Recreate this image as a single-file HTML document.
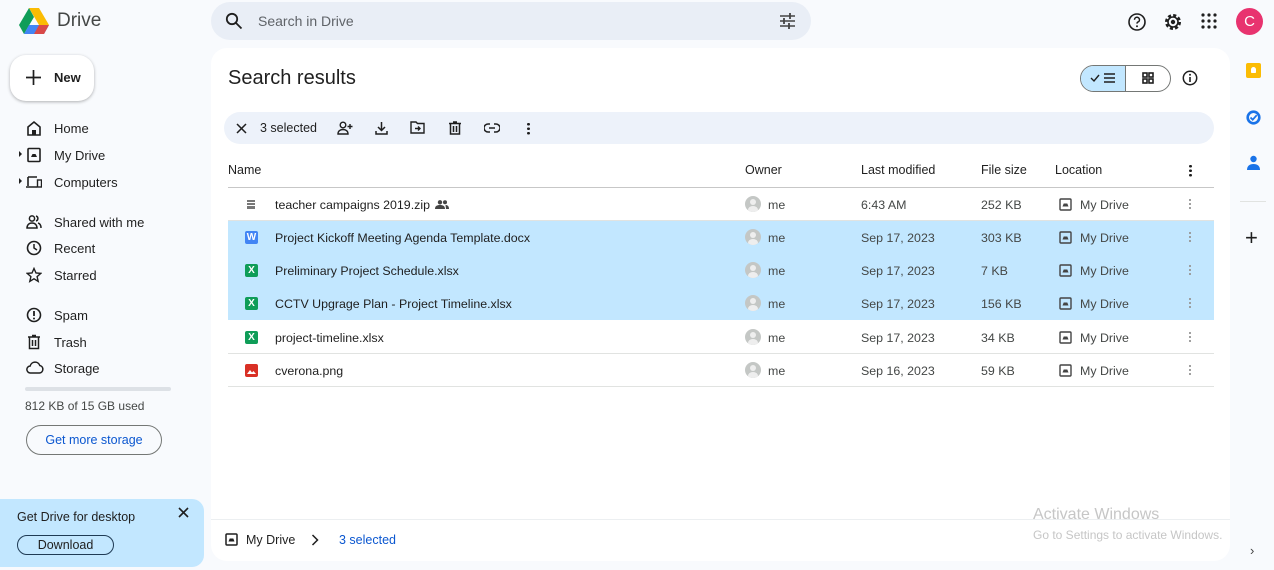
<!DOCTYPE html>
<html><head><meta charset="utf-8">
<style>
*{box-sizing:border-box;margin:0;padding:0}
body{width:1274px;height:570px;overflow:hidden;background:#f8fafd;font-family:"Liberation Sans",Arial,sans-serif;color:#1f1f1f;position:relative;font-size:13px}
.abs{position:absolute}
svg{display:block}
.nav{position:absolute;left:26px;display:flex;align-items:center;font-size:13px;color:#1f1f1f}
.nav svg{margin-right:12px}
.panel{position:absolute;left:211px;top:48px;width:1019px;height:513px;background:#fff;border-radius:16px}
.row{position:absolute;left:17px;width:986px;height:33px;border-bottom:1px solid #e1e3e1;font-size:12.4px}
.row.sel{background:#c2e7ff;border-bottom:1px solid #c2e7ff}
.row span{position:absolute;top:10px}
.row .g{color:#444746}
.fi{position:absolute;left:17px;top:10px;width:13px;height:13px;border-radius:2px;color:#fff;font-size:10px;font-weight:bold;text-align:center;line-height:13px}
.av{position:absolute;left:517px;top:8px;width:16px;height:16px;border-radius:50%;background:#c4c7c5;overflow:hidden}
.av:before{content:"";position:absolute;left:5px;top:3px;width:6px;height:6px;border-radius:50%;background:#eee}
.av:after{content:"";position:absolute;left:3px;top:10px;width:10px;height:8px;border-radius:50%;background:#eee}
.dots{position:absolute;left:961px;top:10px;width:2px;height:12px;background:radial-gradient(circle,#999 1px,transparent 1.2px) 0 0/2px 4px}
.hdr{position:absolute;top:115px;font-size:12.5px;color:#1f1f1f}
</style></head><body>

<svg class="abs" style="left:18px;top:7px" width="32" height="28" viewBox="0 0 32 28">
<path d="M11 1h10l10 17h-10z" fill="#fbbc04"/>
<path d="M11 1L1 18l5 9 10-17z" fill="#0f9d58"/>
<path d="M6 27h20l5-9H11z" fill="#4285f4"/>
<path d="M21 18h10l-5 9h-10z" fill="#ea4335" opacity=".9"/>
</svg>
<div class="abs" style="left:57px;top:10px;font-size:19px;color:#444746">Drive</div>

<div class="abs" style="left:211px;top:2px;width:600px;height:38px;border-radius:19px;background:#e9eef6"></div>
<svg class="abs" style="left:225px;top:12px" width="18" height="18" viewBox="0 0 18 18"><circle cx="7" cy="7" r="5.2" fill="none" stroke="#1f1f1f" stroke-width="1.8"/><path d="M11 11l5.5 5.5" stroke="#1f1f1f" stroke-width="1.8"/></svg>
<div class="abs" style="left:258px;top:13px;font-size:14px;color:#5f6368">Search in Drive</div>
<svg class="abs" style="left:779px;top:13px" width="17" height="16" viewBox="0 0 17 16"><path d="M1 3h15M1 8h15M1 13h15" stroke="#444" stroke-width="1.6"/><path d="M11 0v6M5 5v6M10 10v6" stroke="#444" stroke-width="1.8"/></svg>

<svg class="abs" style="left:1127px;top:12px" width="20" height="20" viewBox="0 0 20 20"><circle cx="10" cy="10" r="8" fill="none" stroke="#1f1f1f" stroke-width="1.6"/><path d="M7.5 7.8a2.5 2.5 0 1 1 3.3 2.3c-.6.3-.8.7-.8 1.5" fill="none" stroke="#1f1f1f" stroke-width="1.5"/><circle cx="10" cy="14.3" r="1" fill="#1f1f1f"/></svg>
<svg class="abs" style="left:1163px;top:12px" width="20" height="20" viewBox="0 0 20 20"><circle cx="10" cy="10" r="6.5" fill="none" stroke="#1f1f1f" stroke-width="3" stroke-dasharray="3 2.1"/><circle cx="10" cy="10" r="5" fill="none" stroke="#1f1f1f" stroke-width="1.6"/><circle cx="10" cy="10" r="2.2" fill="#1f1f1f"/></svg>
<svg class="abs" style="left:1201px;top:13px" width="16" height="16" viewBox="0 0 16 16" fill="#1f1f1f"><circle cx="2" cy="2" r="1.6"/><circle cx="8" cy="2" r="1.6"/><circle cx="14" cy="2" r="1.6"/><circle cx="2" cy="8" r="1.6"/><circle cx="8" cy="8" r="1.6"/><circle cx="14" cy="8" r="1.6"/><circle cx="2" cy="14" r="1.6"/><circle cx="8" cy="14" r="1.6"/><circle cx="14" cy="14" r="1.6"/></svg>
<div class="abs" style="left:1236px;top:8px;width:27px;height:27px;border-radius:50%;background:#e8336f;color:#fff;font-size:15px;text-align:center;line-height:27px">C</div>

<div class="abs" style="left:1246px;top:63px;width:15px;height:15px;background:#fbbc04;border-radius:2px"></div>
<div class="abs" style="left:1251px;top:67px;width:5px;height:6px;background:#fff;border-radius:3px 3px 1px 1px"></div>
<svg class="abs" style="left:1246px;top:110px" width="15" height="15" viewBox="0 0 15 15"><circle cx="7.5" cy="7.5" r="5.8" fill="none" stroke="#1a73e8" stroke-width="2.6"/><path d="M4.5 7.5l2.2 2.2 4-4.5" fill="none" stroke="#1a73e8" stroke-width="1.8"/></svg>
<svg class="abs" style="left:1247px;top:155px" width="13" height="16" viewBox="0 0 13 16"><circle cx="6.5" cy="4" r="3.2" fill="#1a73e8"/><path d="M0 15c0-4 2.5-6 6.5-6s6.5 2 6.5 6z" fill="#1a73e8"/></svg>
<div class="abs" style="left:1240px;top:201px;width:26px;height:1px;background:#e1e3e1"></div>
<div class="abs" style="left:1245px;top:225px;font-size:22px;color:#1f1f1f;font-weight:300">+</div>
<div class="abs" style="left:1250px;top:543px;font-size:13px;color:#444">›</div>

<div class="abs" style="left:10px;top:55px;width:84px;height:46px;border-radius:16px;background:#fff;box-shadow:0 1px 3px rgba(0,0,0,.3)"></div>
<svg class="abs" style="left:26px;top:70px" width="15" height="15" viewBox="0 0 15 15"><path d="M7.5 0v15M0 7.5h15" stroke="#1f1f1f" stroke-width="1.7"/></svg>
<div class="abs" style="left:54px;top:70px;font-size:13px;font-weight:bold;color:#1f1f1f">New</div>

<div class="nav" style="top:120px"><svg width="16" height="16" viewBox="0 0 16 16"><path d="M2 7l6-5 6 5v8H2z" fill="none" stroke="#1f1f1f" stroke-width="1.6"/><rect x="6" y="10" width="4" height="5" fill="#1f1f1f"/></svg><span>Home</span></div>
<div class="abs" style="left:19px;top:151px;border-left:3px solid #1f1f1f;border-top:3px solid transparent;border-bottom:3px solid transparent"></div>
<div class="nav" style="top:147px"><svg width="16" height="16" viewBox="0 0 16 16"><rect x="2" y="1.5" width="12" height="13" rx="1" fill="none" stroke="#1f1f1f" stroke-width="1.6"/><path d="M5 10h6l-1.5-3h-3z" fill="#1f1f1f"/></svg><span>My Drive</span></div>
<div class="abs" style="left:19px;top:178px;border-left:3px solid #1f1f1f;border-top:3px solid transparent;border-bottom:3px solid transparent"></div>
<div class="nav" style="top:174px"><svg width="16" height="16" viewBox="0 0 16 16"><path d="M2 3h9M2 3v9M0 13h11" stroke="#1f1f1f" stroke-width="1.6" fill="none"/><rect x="11.5" y="6" width="4" height="7" fill="none" stroke="#1f1f1f" stroke-width="1.4"/></svg><span>Computers</span></div>
<div class="nav" style="top:214px"><svg width="16" height="16" viewBox="0 0 16 16"><circle cx="6" cy="4.5" r="2.6" fill="none" stroke="#1f1f1f" stroke-width="1.5"/><path d="M1 14c0-3 2-5 5-5s5 2 5 5z" fill="none" stroke="#1f1f1f" stroke-width="1.5"/><path d="M10 2a2.6 2.6 0 0 1 0 5M12 9c2 .5 3 2.5 3 5" fill="none" stroke="#1f1f1f" stroke-width="1.5"/></svg><span>Shared with me</span></div>
<div class="nav" style="top:240px"><svg width="16" height="16" viewBox="0 0 16 16"><circle cx="8" cy="8" r="6.5" fill="none" stroke="#1f1f1f" stroke-width="1.6"/><path d="M8 4v4l3 2" fill="none" stroke="#1f1f1f" stroke-width="1.5"/></svg><span>Recent</span></div>
<div class="nav" style="top:267px"><svg width="16" height="16" viewBox="0 0 16 16"><path d="M8 1.5l2 4.5 4.8.4-3.7 3.2 1.1 4.8L8 11.8l-4.2 2.6 1.1-4.8L1.2 6.4 6 6z" fill="none" stroke="#1f1f1f" stroke-width="1.4"/></svg><span>Starred</span></div>
<div class="nav" style="top:307px"><svg width="16" height="16" viewBox="0 0 16 16"><circle cx="8" cy="8" r="6.5" fill="none" stroke="#1f1f1f" stroke-width="1.6"/><path d="M8 4v5" stroke="#1f1f1f" stroke-width="1.8"/><circle cx="8" cy="11.5" r="1" fill="#1f1f1f"/></svg><span>Spam</span></div>
<div class="nav" style="top:334px"><svg width="16" height="16" viewBox="0 0 16 16"><path d="M2 3h12M6 1.5h4M3.5 3.5v11h9v-11M6.5 6v6M9.5 6v6" fill="none" stroke="#1f1f1f" stroke-width="1.5"/></svg><span>Trash</span></div>
<div class="nav" style="top:360px"><svg width="18" height="16" viewBox="0 0 18 16"><path d="M4.5 13a3.5 3.5 0 0 1-.3-7A5 5 0 0 1 13.8 5.5 3.8 3.8 0 0 1 13.5 13z" fill="none" stroke="#1f1f1f" stroke-width="1.5"/></svg><span style="margin-left:-2px">Storage</span></div>
<div class="abs" style="left:25px;top:387px;width:146px;height:4px;border-radius:2px;background:#dde1e6"></div>
<div class="abs" style="left:25px;top:399px;font-size:12px;color:#444746">812 KB of 15 GB used</div>
<div class="abs" style="left:26px;top:425px;width:136px;height:30px;border:1px solid #747775;border-radius:15px;color:#0b57d0;font-size:12.5px;text-align:center;line-height:28px">Get more storage</div>

<div class="abs" style="left:0;top:499px;width:204px;height:68px;background:#c2e7ff;border-radius:0 12px 12px 0"></div>
<div class="abs" style="left:17px;top:510px;font-size:12.5px;color:#1f1f1f">Get Drive for desktop</div>
<svg class="abs" style="left:178px;top:507px" width="11" height="11" viewBox="0 0 11 11"><path d="M1 1l9 9M10 1l-9 9" stroke="#1f1f1f" stroke-width="1.6"/></svg>
<div class="abs" style="left:17px;top:535px;width:97px;height:20px;border:1px solid #1f3b55;border-radius:10px;font-size:12.5px;text-align:center;line-height:18px;color:#1f1f1f">Download</div>

<div class="panel">
  <div class="abs" style="left:17px;top:19px;font-size:20px;color:#1f1f1f">Search results</div>
  <div class="abs" style="left:869px;top:17px;width:91px;height:27px;border:1px solid #747775;border-radius:14px;overflow:hidden">
    <div style="position:absolute;left:0;top:0;width:45px;height:27px;background:#c2e7ff;border-right:1px solid #747775"></div>
  </div>
  <svg class="abs" style="left:879px;top:24px" width="30" height="12" viewBox="0 0 30 12"><path d="M1 6l3 3 5-6" fill="none" stroke="#1f1f1f" stroke-width="1.4"/><path d="M14 2h11M14 6h11M14 10h11" stroke="#1f1f1f" stroke-width="1.6"/></svg>
  <svg class="abs" style="left:931px;top:24px" width="12" height="12" viewBox="0 0 12 12" fill="none" stroke="#1f1f1f" stroke-width="1.6"><rect x="1" y="1" width="4" height="4"/><rect x="7" y="1" width="4" height="4"/><rect x="1" y="7" width="4" height="4"/><rect x="7" y="7" width="4" height="4"/></svg>
  <svg class="abs" style="left:971px;top:22px" width="16" height="16" viewBox="0 0 16 16"><circle cx="8" cy="8" r="6.7" fill="none" stroke="#1f1f1f" stroke-width="1.5"/><path d="M8 7v5" stroke="#1f1f1f" stroke-width="1.6"/><circle cx="8" cy="4.7" r="1" fill="#1f1f1f"/></svg>

  <div class="abs" style="left:13px;top:64px;width:990px;height:32px;border-radius:16px;background:#edf2fa"></div>
  <svg class="abs" style="left:25px;top:75px" width="11" height="11" viewBox="0 0 11 11"><path d="M1 1l9 9M10 1l-9 9" stroke="#1f1f1f" stroke-width="1.5"/></svg>
  <div class="abs" style="left:49px;top:73px;font-size:12.5px;color:#1f1f1f">3 selected</div>
  <svg class="abs" style="left:126px;top:73px" width="17" height="14" viewBox="0 0 17 14" fill="none" stroke="#1f1f1f" stroke-width="1.4"><circle cx="6" cy="4" r="2.8"/><path d="M1 13c0-3 2-4.5 5-4.5s5 1.5 5 4.5z"/><path d="M13 3v5M10.5 5.5h5"/></svg>
  <svg class="abs" style="left:164px;top:73px" width="13" height="14" viewBox="0 0 13 14" fill="none" stroke="#1f1f1f" stroke-width="1.5"><path d="M6.5 1v8M3 6l3.5 3.5L10 6M1 10v3h11v-3"/></svg>
  <svg class="abs" style="left:199px;top:73px" width="15" height="13" viewBox="0 0 15 13" fill="none" stroke="#1f1f1f" stroke-width="1.4"><path d="M1 1h5l1.5 1.5H14V12H1z"/><path d="M5 7.5h5M8 5.5l2 2-2 2"/></svg>
  <svg class="abs" style="left:238px;top:73px" width="12" height="14" viewBox="0 0 12 14" fill="none" stroke="#1f1f1f" stroke-width="1.5"><path d="M0 2.5h12M4 1h4M1.5 3v10h9V3M4.5 5v6M7.5 5v6"/></svg>
  <svg class="abs" style="left:273px;top:75px" width="16" height="10" viewBox="0 0 16 10" fill="none" stroke="#1f1f1f" stroke-width="1.5"><path d="M6 1H4a4 4 0 0 0 0 8h2M10 1h2a4 4 0 0 1 0 8h-2M5 5h6"/></svg>
  <div class="abs" style="left:316px;top:74px;width:3px;height:13px;background:radial-gradient(circle,#1f1f1f 1.3px,transparent 1.5px) 0 0/3px 4.5px"></div>

  <div class="hdr" style="left:17px">Name</div>
  <div class="hdr" style="left:534px">Owner</div>
  <div class="hdr" style="left:650px">Last modified</div>
  <div class="hdr" style="left:770px">File size</div>
  <div class="hdr" style="left:844px">Location</div>
  <div class="abs" style="left:978px;top:116px;width:3px;height:13px;background:radial-gradient(circle,#1f1f1f 1.3px,transparent 1.5px) 0 0/3px 4.5px"></div>
  <div class="abs" style="left:17px;top:139px;width:986px;height:1px;background:#c7c7c7"></div>

  <div class="row" style="top:140px">
    <div class="fi" style="left:19px;width:8px;top:12px;background:linear-gradient(#777 0 2px,transparent 2px 3px,#777 3px 5px,transparent 5px 6px,#777 6px 8px);height:9px;border-radius:0"></div>
    <span style="left:47px">teacher campaigns 2019.zip</span>
    <svg class="abs" style="left:207px;top:12px" width="14" height="9" viewBox="0 0 14 9" fill="#444"><circle cx="5" cy="2.3" r="2.2"/><circle cx="10" cy="2.3" r="2"/><path d="M0 9c0-3 2-4 5-4s5 1 5 4zM10.5 5c2 0 3.5 1 3.5 4h-3"/></svg>
    <div class="av"></div><span class="g" style="left:540px">me</span>
    <span class="g" style="left:633px">6:43 AM</span>
    <span class="g" style="left:753px">252 KB</span>
    <svg class="abs" style="left:831px;top:10px" width="13" height="13" viewBox="0 0 13 13"><rect x="1" y="1" width="11" height="11" rx="1" fill="none" stroke="#444" stroke-width="1.4"/><path d="M3.5 8.5h6L8.3 5.5H4.7z" fill="#444"/></svg>
    <span class="g" style="left:852px">My Drive</span><div class="dots"></div>
  </div>
  <div class="row sel" style="top:173px">
    <div class="fi" style="background:#4285f4">W</div>
    <span style="left:47px">Project Kickoff Meeting Agenda Template.docx</span>
    <div class="av"></div><span class="g" style="left:540px">me</span>
    <span class="g" style="left:633px">Sep 17, 2023</span>
    <span class="g" style="left:753px">303 KB</span>
    <svg class="abs" style="left:831px;top:10px" width="13" height="13" viewBox="0 0 13 13"><rect x="1" y="1" width="11" height="11" rx="1" fill="none" stroke="#444" stroke-width="1.4"/><path d="M3.5 8.5h6L8.3 5.5H4.7z" fill="#444"/></svg>
    <span class="g" style="left:852px">My Drive</span><div class="dots"></div>
  </div>
  <div class="row sel" style="top:206px">
    <div class="fi" style="background:#0f9d58">X</div>
    <span style="left:47px">Preliminary Project Schedule.xlsx</span>
    <div class="av"></div><span class="g" style="left:540px">me</span>
    <span class="g" style="left:633px">Sep 17, 2023</span>
    <span class="g" style="left:753px">7 KB</span>
    <svg class="abs" style="left:831px;top:10px" width="13" height="13" viewBox="0 0 13 13"><rect x="1" y="1" width="11" height="11" rx="1" fill="none" stroke="#444" stroke-width="1.4"/><path d="M3.5 8.5h6L8.3 5.5H4.7z" fill="#444"/></svg>
    <span class="g" style="left:852px">My Drive</span><div class="dots"></div>
  </div>
  <div class="row sel" style="top:239px">
    <div class="fi" style="background:#0f9d58">X</div>
    <span style="left:47px">CCTV Upgrage Plan - Project Timeline.xlsx</span>
    <div class="av"></div><span class="g" style="left:540px">me</span>
    <span class="g" style="left:633px">Sep 17, 2023</span>
    <span class="g" style="left:753px">156 KB</span>
    <svg class="abs" style="left:831px;top:10px" width="13" height="13" viewBox="0 0 13 13"><rect x="1" y="1" width="11" height="11" rx="1" fill="none" stroke="#444" stroke-width="1.4"/><path d="M3.5 8.5h6L8.3 5.5H4.7z" fill="#444"/></svg>
    <span class="g" style="left:852px">My Drive</span><div class="dots"></div>
  </div>
  <div class="row" style="top:273px">
    <div class="fi" style="background:#0f9d58">X</div>
    <span style="left:47px">project-timeline.xlsx</span>
    <div class="av"></div><span class="g" style="left:540px">me</span>
    <span class="g" style="left:633px">Sep 17, 2023</span>
    <span class="g" style="left:753px">34 KB</span>
    <svg class="abs" style="left:831px;top:10px" width="13" height="13" viewBox="0 0 13 13"><rect x="1" y="1" width="11" height="11" rx="1" fill="none" stroke="#444" stroke-width="1.4"/><path d="M3.5 8.5h6L8.3 5.5H4.7z" fill="#444"/></svg>
    <span class="g" style="left:852px">My Drive</span><div class="dots"></div>
  </div>
  <div class="row" style="top:306px">
    <div class="fi" style="background:#d93025"><svg width="13" height="13" viewBox="0 0 13 13"><path d="M2 10l3-4 2 2.5 1.5-1.5 2.5 3z" fill="#fff"/></svg></div>
    <span style="left:47px">cverona.png</span>
    <div class="av"></div><span class="g" style="left:540px">me</span>
    <span class="g" style="left:633px">Sep 16, 2023</span>
    <span class="g" style="left:753px">59 KB</span>
    <svg class="abs" style="left:831px;top:10px" width="13" height="13" viewBox="0 0 13 13"><rect x="1" y="1" width="11" height="11" rx="1" fill="none" stroke="#444" stroke-width="1.4"/><path d="M3.5 8.5h6L8.3 5.5H4.7z" fill="#444"/></svg>
    <span class="g" style="left:852px">My Drive</span><div class="dots"></div>
  </div>

  <div class="abs" style="left:0;top:471px;width:1019px;height:1px;background:#eceff1"></div>
  <svg class="abs" style="left:14px;top:485px" width="13" height="13" viewBox="0 0 13 13"><rect x="1" y="1" width="11" height="11" rx="1" fill="none" stroke="#1f1f1f" stroke-width="1.5"/><path d="M3.5 8.5h6L8.3 5.5H4.7z" fill="#1f1f1f"/></svg>
  <div class="abs" style="left:35px;top:485px;font-size:12.5px;color:#1f1f1f">My Drive</div>
  <svg class="abs" style="left:100px;top:486px" width="8" height="12" viewBox="0 0 8 12"><path d="M1.5 1l5 5-5 5" fill="none" stroke="#1f1f1f" stroke-width="1.5"/></svg>
  <div class="abs" style="left:128px;top:485px;font-size:12.5px;color:#0b57d0">3 selected</div>
</div>

<div class="abs" style="left:1033px;top:506px;font-size:16px;color:#c6c6c6">Activate Windows</div>
<div class="abs" style="left:1033px;top:528px;font-size:12px;color:#c6c6c6">Go to Settings to activate Windows.</div>
</body></html>
